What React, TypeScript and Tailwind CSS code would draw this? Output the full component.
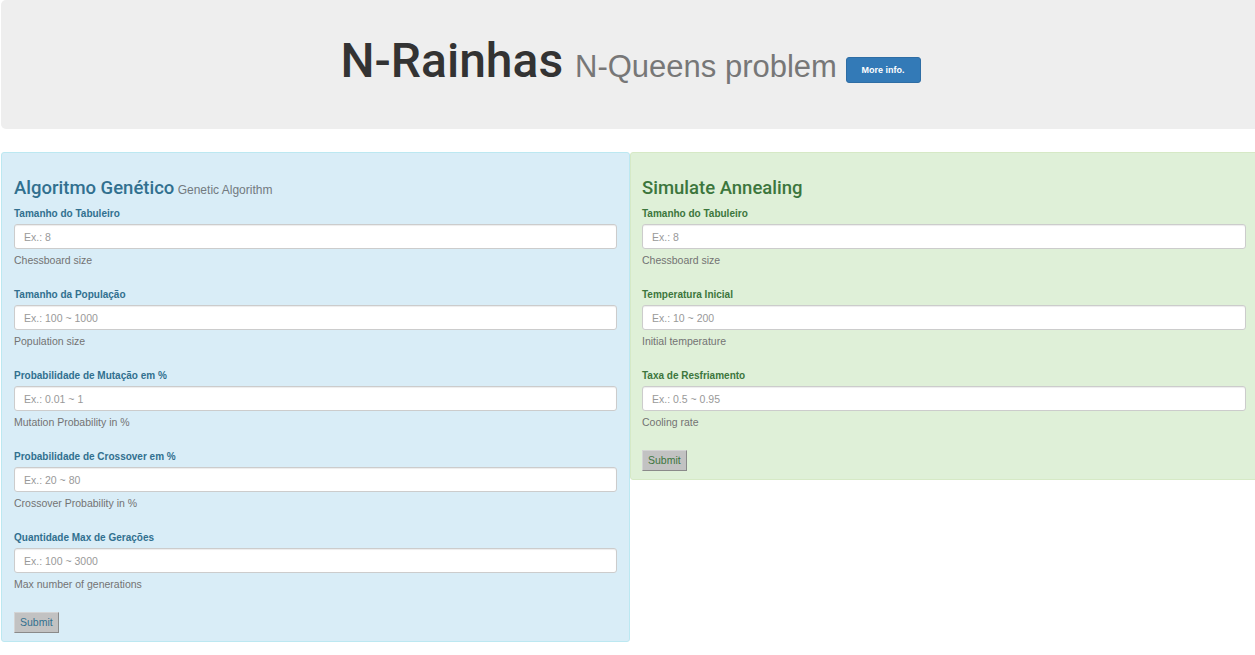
const font = { fontFamily: '"Liberation Sans", Arial, Helvetica, sans-serif' };
const heading = { fontFamily: 'Roboto, "Liberation Sans", Arial, sans-serif' };

type Field = { label: string; placeholder: string; help: string };

const genetic: Field[] = [
  { label: "Tamanho do Tabuleiro", placeholder: "Ex.: 8", help: "Chessboard size" },
  { label: "Tamanho da População", placeholder: "Ex.: 100 ~ 1000", help: "Population size" },
  { label: "Probabilidade de Mutação em %", placeholder: "Ex.: 0.01 ~ 1", help: "Mutation Probability in %" },
  { label: "Probabilidade de Crossover em %", placeholder: "Ex.: 20 ~ 80", help: "Crossover Probability in %" },
  { label: "Quantidade Max de Gerações", placeholder: "Ex.: 100 ~ 3000", help: "Max number of generations" },
];

const annealing: Field[] = [
  { label: "Tamanho do Tabuleiro", placeholder: "Ex.: 8", help: "Chessboard size" },
  { label: "Temperatura Inicial", placeholder: "Ex.: 10 ~ 200", help: "Initial temperature" },
  { label: "Taxa de Resfriamento", placeholder: "Ex.: 0.5 ~ 0.95", help: "Cooling rate" },
];

const FormGroup = ({ label, placeholder, help }: Field) => (
  <div className="mb-[20px]">
    <label className="block text-[10px] leading-[14px] font-bold mb-[3px]">{label}</label>
    <input
      type="text"
      placeholder={placeholder}
      className="block w-full h-[25px] px-[9px] bg-white border border-[#ccc] rounded-[3px] text-[10.5px] text-[#555] placeholder:text-[#999] shadow-[inset_0_1px_1px_rgba(0,0,0,0.075)] outline-none"
    />
    <p className="mt-[4px] text-[10.5px] leading-[15px] text-[#737373]">{help}</p>
  </div>
);

const Panel = ({
  title,
  subtitle,
  fields,
  tone,
}: {
  title: string;
  subtitle?: string;
  fields: Field[];
  tone: "info" | "success";
}) => (
  <div
    className={
      tone === "info"
        ? "bg-[#d9edf7] border border-[#bce8f1] text-[#31708f] rounded-[3px] pl-[12px] pr-[12px] pt-[25px] pb-[8px]"
        : "bg-[#dff0d8] border border-[#d6e9c6] text-[#3c763d] rounded-[3px] pl-[11px] pr-[12px] pt-[25px] pb-[8px]"
    }
  >
    <h3 className="text-[18.5px] leading-[21px] mb-[8px] font-medium" style={heading}>
      {title}
      {subtitle && (
        <small className="text-[12px] leading-none font-normal text-[#727a80]" style={font}>
          {" "}
          {subtitle}
        </small>
      )}
    </h3>
    <form onSubmit={(e) => e.preventDefault()}>
      {fields.map((f) => (
        <FormGroup key={f.label} {...f} />
      ))}
      <button
        type="submit"
        className="block h-[21px] px-[5px] text-[10.5px] leading-[19px] bg-[#c2c2c2] border border-[#d4d4d4] border-r-[#8a8a8a] border-b-[#8a8a8a]"
      >
        Submit
      </button>
    </form>
  </div>
);

export default function App() {
  return (
    <div className="w-full overflow-hidden bg-white" style={font}>
      <div className="w-[1260px] pl-[1px]">
        <div className="h-[129px] bg-[#eee] rounded-[5px] pt-[35px]">
          <h1
            className="text-center text-[48px] leading-[1.1] text-[#333] font-medium whitespace-nowrap"
            style={heading}
          >
            <span>N-Rainhas </span>
            <small className="text-[31px] leading-none font-normal text-[#777]" style={font}>
              N-Queens problem{" "}
            </small>
            <a
              href="#"
              className="inline-block align-[4px] h-[26px] px-[15px] text-[9px] leading-[24px] font-bold text-white bg-[#337ab7] border border-[#2e6da4] rounded-[3px]"
              style={font}
            >
              More info.
            </a>
          </h1>
        </div>
        <div className="grid grid-cols-[629px_629px] items-start mt-[23px]">
          <Panel title="Algoritmo Genético" subtitle="Genetic Algorithm" fields={genetic} tone="info" />
          <Panel title="Simulate Annealing" fields={annealing} tone="success" />
        </div>
      </div>
    </div>
  );
}
